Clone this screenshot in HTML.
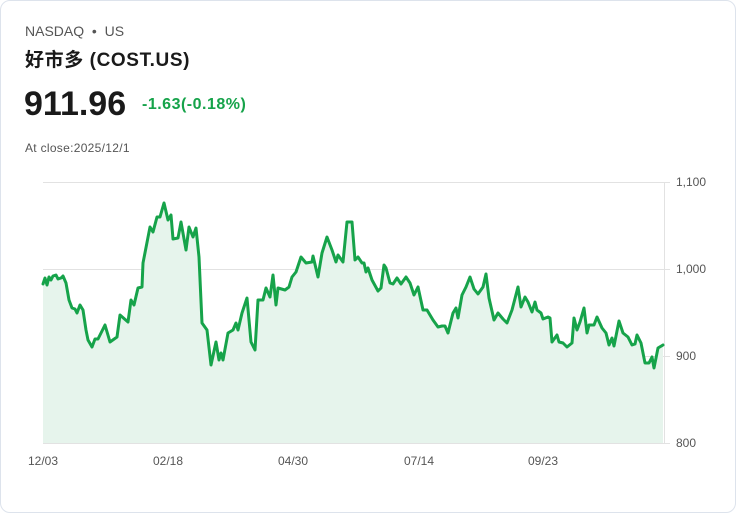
<!DOCTYPE html>
<html><head><meta charset="utf-8"><style>
body{margin:0;width:736px;height:513px;background:#fff;font-family:"Liberation Sans","Noto Sans CJK SC",sans-serif;overflow:hidden}
.card{position:absolute;left:0;top:0;width:734px;height:511px;border:1px solid #dde3ec;border-radius:10px}
.t{position:absolute;white-space:nowrap}
</style></head><body>
<div class="card"></div>
<div class="t" style="left:25px;top:23px;font-size:14px;color:#555">NASDAQ &nbsp;•&nbsp; US</div>
<div class="t" style="left:25px;top:45px;font-size:19px;font-weight:bold;color:#1a1a1a;letter-spacing:0.6px">好市多 (COST.US)</div>
<div class="t" style="left:24px;top:85px;font-size:34px;font-weight:bold;color:#1a1a1a">911.96</div>
<div class="t" style="left:142px;top:96px;font-size:16px;font-weight:bold;color:#16a34a;letter-spacing:0.5px">-1.63(-0.18%)</div>
<div class="t" style="left:25px;top:141px;font-size:12px;color:#555;letter-spacing:0.3px">At close:2025/12/1</div>
<svg style="position:absolute;left:0;top:0" width="736" height="513">
<g stroke="#e2e2e2" stroke-width="1">
<line x1="43" y1="182.5" x2="670" y2="182.5"/><line x1="43" y1="269.5" x2="670" y2="269.5"/>
<line x1="43" y1="356.5" x2="670" y2="356.5"/><line x1="43" y1="443.5" x2="670" y2="443.5"/>
<line x1="664.5" y1="182" x2="664.5" y2="443"/>
</g>
<g font-size="12" fill="#555" font-family="Liberation Sans,sans-serif">
<text x="676" y="186">1,100</text><text x="676" y="273">1,000</text><text x="676" y="360">900</text><text x="676" y="447">800</text>
<text x="28" y="465">12/03</text><text x="153" y="465">02/18</text><text x="278" y="465">04/30</text><text x="404" y="465">07/14</text><text x="528" y="465">09/23</text>
</g>
<path fill="#e6f4ec" d="M43,443 L43,284 45,278 47,285 49,277 51,280 53,276 56,275 58,279 61,278 63,276 66,283 69,300 72,308 75,309 77,313 80,305 83,310 86,330 88,340 92,347 95,339 98,339 101,333 105,325 110,342 117,337 120,315 128,322 131,300 134,305 138,288 142,287 143,263 150,227 153,232 157,217 160,217 164,203 168,220 171,215 173,239 178,238 181,222 186,250 189,227 193,237 196,228 199,257 202,323 207,330 211,365 216,342 219,360 221,353 223,360 228,333 233,330 236,323 238,330 242,313 247,298 251,342 255,350 258,300 263,300 266,288 270,297 273,275 276,305 278,288 285,290 289,287 292,277 296,272 301,257 306,263 312,262 313,256 318,277 322,253 327,237 332,250 336,262 338,255 343,262 347,222 352,222 355,260 358,257 362,263 364,263 366,272 368,268 372,280 378,291 381,288 384,265 386,268 390,283 393,284 397,278 401,284 406,277 410,283 414,295 418,287 423,310 427,310 433,320 438,327 442,326 445,326 448,333 453,313 456,308 458,318 462,295 466,287 470,277 474,289 478,294 483,287 486,274 489,298 494,320 498,313 503,319 507,323 512,310 518,287 521,307 525,297 528,302 532,312 535,302 537,310 541,313 543,319 548,317 550,318 552,342 557,335 559,342 563,343 567,347 572,343 574,318 577,330 580,322 584,308 587,333 589,325 594,325 597,317 602,328 606,333 609,345 612,338 614,346 619,321 623,333 628,337 632,345 635,344 637,335 641,343 645,363 649,363 652,357 654,368 658,348 663,345 L663,443 Z"/>
<path fill="none" stroke="#16a34a" stroke-width="3" stroke-linejoin="round" stroke-linecap="round" d="M43,284 45,278 47,285 49,277 51,280 53,276 56,275 58,279 61,278 63,276 66,283 69,300 72,308 75,309 77,313 80,305 83,310 86,330 88,340 92,347 95,339 98,339 101,333 105,325 110,342 117,337 120,315 128,322 131,300 134,305 138,288 142,287 143,263 150,227 153,232 157,217 160,217 164,203 168,220 171,215 173,239 178,238 181,222 186,250 189,227 193,237 196,228 199,257 202,323 207,330 211,365 216,342 219,360 221,353 223,360 228,333 233,330 236,323 238,330 242,313 247,298 251,342 255,350 258,300 263,300 266,288 270,297 273,275 276,305 278,288 285,290 289,287 292,277 296,272 301,257 306,263 312,262 313,256 318,277 322,253 327,237 332,250 336,262 338,255 343,262 347,222 352,222 355,260 358,257 362,263 364,263 366,272 368,268 372,280 378,291 381,288 384,265 386,268 390,283 393,284 397,278 401,284 406,277 410,283 414,295 418,287 423,310 427,310 433,320 438,327 442,326 445,326 448,333 453,313 456,308 458,318 462,295 466,287 470,277 474,289 478,294 483,287 486,274 489,298 494,320 498,313 503,319 507,323 512,310 518,287 521,307 525,297 528,302 532,312 535,302 537,310 541,313 543,319 548,317 550,318 552,342 557,335 559,342 563,343 567,347 572,343 574,318 577,330 580,322 584,308 587,333 589,325 594,325 597,317 602,328 606,333 609,345 612,338 614,346 619,321 623,333 628,337 632,345 635,344 637,335 641,343 645,363 649,363 652,357 654,368 658,348 663,345"/>
</svg>
</body></html>
